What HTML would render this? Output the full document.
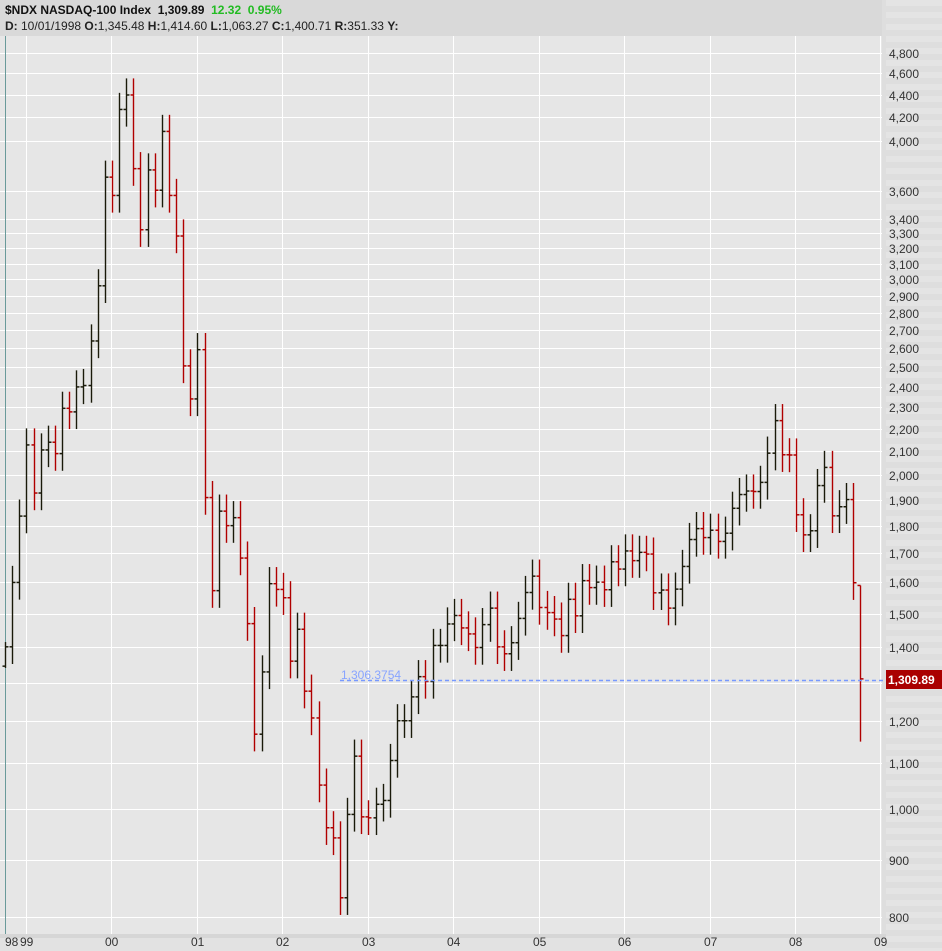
<!DOCTYPE html>
<html><head><meta charset="utf-8"><style>
html,body{margin:0;padding:0;width:942px;height:951px;overflow:hidden;background:#e6e6e6;font-family:"Liberation Sans",sans-serif}
#hdr{position:absolute;left:0;top:0;width:942px;height:36px;background:#d9d9d9}
.t1{position:absolute;left:5px;top:3px;font-size:12px;font-weight:bold;color:#111;white-space:pre}
.t2{position:absolute;left:5px;top:19px;font-size:12px;color:#222;white-space:pre}
</style></head><body>
<div id="hdr">
<div class="t1">$NDX NASDAQ-100 Index  1,309.89  <span style="color:#22bb22">12.32  0.95%</span></div>
<div class="t2"><b>D:</b> 10/01/1998 <b>O:</b>1,345.48 <b>H:</b>1,414.60 <b>L:</b>1,063.27 <b>C:</b>1,400.71 <b>R:</b>351.33 <b>Y:</b></div>
</div>
<svg id="s" width="942" height="951" style="position:absolute;left:0;top:0" xmlns="http://www.w3.org/2000/svg"></svg>
<script>
var s=document.getElementById('s'),h='';
function Y(p){return 4140-482.2*Math.log(p);}
h+='<rect x="882" y="0" width="60" height="951" fill="#dedede"/>';
for(var y=0;y<951;y+=12){h+='<rect x="886" y="'+y+'" width="56" height="6" fill="#e4e4e4"/>';}
h+='<rect x="0" y="36" width="882" height="898" fill="#e6e6e6"/>';
h+='<rect x="0" y="934" width="886" height="17" fill="#e2e2e2"/><rect x="0" y="934" width="886" height="4" fill="#d6d6d6"/>';
var lv=[4800,4600,4400,4200,4000,3600,3400,3300,3200,3100,3000,2900,2800,2700,2600,2500,2400,2300,2200,2100,2000,1900,1800,1700,1600,1500,1400,1300,1200,1100,1000,900,800];
lv.forEach(function(p){var y=Math.round(Y(p))+.5;h+='<line x1="0" x2="882" y1="'+y+'" y2="'+y+'" stroke="#fff"/>';
 if(p!=1300)h+='<text x="889" y="'+(y+4.5)+'" font-size="12" fill="#333">'+p.toLocaleString('en-US')+'</text>';});
var gx=[26,111,197,282,368,453,539,624,710,795,880],gl=['99','00','01','02','03','04','05','06','07','08','09'];
gx.forEach(function(x,i){h+='<line x1="'+(x+.5)+'" x2="'+(x+.5)+'" y1="36" y2="934" stroke="#fff"/>';
 h+='<text x="'+(x-6)+'" y="946" font-size="12" fill="#333">'+gl[i]+'</text>';});
h+='<text x="5" y="946" font-size="12" fill="#333">98</text>';
h+='<line x1="5.5" x2="5.5" y1="36" y2="934" stroke="#6a9a9a"/>';
var c=[1400,1600,1836,2128,1926,2106,2140,2090,2296,2279,2400,2407,2640,2960,3708,3570,4267,4397,3774,3325,3764,3609,4077,3570,3282,2507,2341,2593,1908,1573,1855,1800,1830,1683,1469,1168,1329,1596,1577,1550,1359,1452,1277,1208,1051,962,942,832,989,1116,984,982,1010,1018,1106,1201,1201,1262,1316,1303,1404,1404,1468,1494,1456,1438,1398,1466,1517,1400,1380,1412,1485,1567,1621,1519,1503,1483,1433,1545,1493,1606,1583,1601,1576,1670,1645,1708,1674,1703,1697,1566,1575,1517,1578,1654,1749,1789,1756,1783,1742,1772,1866,1920,1934,1932,1969,2092,2238,2085,2084,1841,1766,1781,1956,2031,1837,1872,1900,1599,1310];
var o=1345;
c.forEach(function(cl,i){var x=Math.round(5+i*7.125)+.5;var hi=Math.max(o,cl)*1.035,lo=Math.min(o,cl)*0.965;
 if(i==0){hi=1414;lo=1340;} if(i==c.length-1){hi=1590;lo=1150;o=1590;}
 var col=(i>0&&cl<c[i-1])?'#b00000':'#1a1a0a';
 h+='<line x1="'+x+'" x2="'+x+'" y1="'+Y(hi)+'" y2="'+Y(lo)+'" stroke="'+col+'" stroke-width="1.4"/>';
 h+='<line x1="'+(x-3)+'" x2="'+x+'" y1="'+Y(o)+'" y2="'+Y(o)+'" stroke="'+col+'" stroke-width="1.5"/>';
 h+='<line x1="'+x+'" x2="'+(x+3)+'" y1="'+Y(cl)+'" y2="'+Y(cl)+'" stroke="'+col+'" stroke-width="1.5"/>';
 o=cl;});
h+='<line x1="340" x2="884" y1="680.5" y2="680.5" stroke="#7799ff" stroke-width="1.5" stroke-dasharray="4,3"/>';
h+='<text x="341" y="679" font-size="12" fill="#88a4ff">1,306.3754</text>';
h+='<rect x="886" y="670" width="56" height="19" fill="#aa0000"/><text x="888" y="684" font-size="12" font-weight="bold" fill="#fff">1,309.89</text>';
s.innerHTML=h;
</script>
</body></html>
